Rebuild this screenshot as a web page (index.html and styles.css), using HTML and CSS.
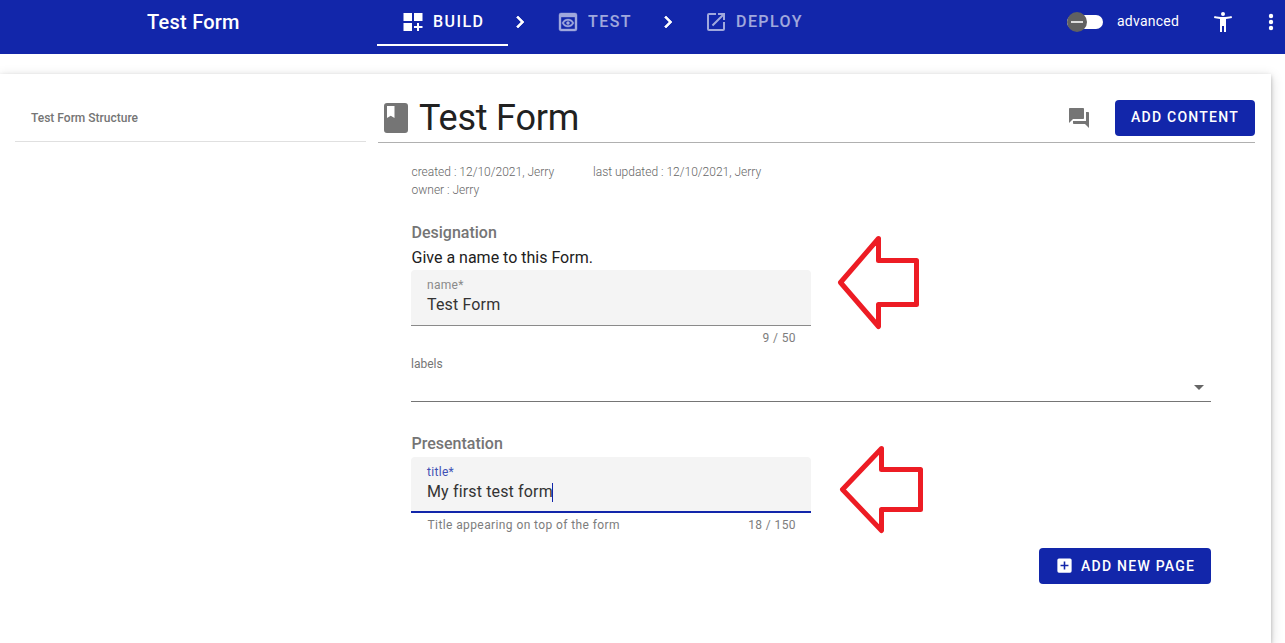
FILE: index.html
```html
<!DOCTYPE html>
<html lang="en">
<head>
<meta charset="utf-8">
<title>Test Form</title>
<link rel="stylesheet" href="styles.css">
</head>
<body>
<header class="topbar">
  <div class="app-title">Test Form</div>
  <nav class="steps">
    <a class="step step-build active"><svg class="icon" viewBox="0 0 24 24"><path d="M2.500 11H11V3H2.500zM13 3v8h8.500V3zM2.500 21H11v-8H2.500zM18 13h-2v3h-3v2h3v3h2v-3h3.500v-2H18z"/></svg><span>BUILD</span></a>
    <svg class="icon" viewBox="0 0 24 24"><path d="M10 6 8.590 7.410 13.170 12l-4.580 4.590L10 18l6-6z" stroke="#fff" stroke-width=".7"/></svg>
    <a class="step step-test"><svg class="icon" viewBox="0 0 24 24"><path d="M19 3H5a2 2 0 0 0-2 2v14c0 1.100.9 2 2 2h14a2 2 0 0 0 2-2V5a2 2 0 0 0-2-2zm0 16H5V7h14v12zM12 10.500c1.840 0 3.480.96 4.340 2.500-.86 1.540-2.500 2.500-4.340 2.500s-3.480-.96-4.340-2.500c.86-1.540 2.500-2.500 4.340-2.500M12 9c-2.730 0-5.060 1.660-6 4 .94 2.340 3.270 4 6 4s5.060-1.660 6-4c-.94-2.340-3.270-4-6-4zm0 5.500a1.500 1.500 0 1 1 0-3 1.500 1.500 0 0 1 0 3z" stroke="#fff" stroke-width=".4"/></svg><span>TEST</span></a>
    <svg class="icon" viewBox="0 0 24 24"><path d="M10 6 8.590 7.410 13.170 12l-4.580 4.590L10 18l6-6z" stroke="#fff" stroke-width=".7"/></svg>
    <a class="step step-deploy"><svg class="icon" viewBox="0 0 24 24"><path d="M19 19H5V5h7V3H5a2 2 0 0 0-2 2v14a2 2 0 0 0 2 2h14a2 2 0 0 0 2-2v-7h-2zM14 3v2h3.590l-9.830 9.830 1.410 1.410L19 6.410V10h2V3z"/></svg><span>DEPLOY</span></a>
  </nav>
  <div class="tools">
    <span class="switch"><span class="thumb"></span></span>
    <span class="advanced">advanced</span>
    <svg class="icon person" viewBox="0 0 24 24"><path d="M20.500 6c-2.610.7-5.670 1-8.500 1s-5.890-.3-8.500-1L3 8c1.860.5 4 .83 6 1v13h2v-6h2v6h2V9c2-.17 4.140-.5 6-1zM12 6a2 2 0 1 0 0-4 2 2 0 0 0 0 4z"/></svg>
    <svg class="icon more" viewBox="0 0 24 24"><circle cx="12" cy="6" r="2.200"/><circle cx="12" cy="12" r="2.200"/><circle cx="12" cy="18" r="2.200"/></svg>
  </div>
</header>
<main class="card">
  <aside class="structure">Test Form Structure</aside>
  <section class="content">
    <div class="heading">
      <svg class="book" viewBox="0 0 24 24"><path d="M18 2H6a2 2 0 0 0-2 2v16a2 2 0 0 0 2 2h12a2 2 0 0 0 2-2V4a2 2 0 0 0-2-2zM6 4h5v8l-2.500-1.500L6 12z"/></svg>
      <h1>Test Form</h1>
      <svg class="icon chat" viewBox="0 0 24 24"><path d="M21 6h-2v9H6v2c0 .55.45 1 1 1h11l4 4V7c0-.55-.45-1-1-1zm-4 6V3c0-.55-.45-1-1-1H3c-.55 0-1 .45-1 1v14l4-4h10c.55 0 1-.45 1-1z"/></svg>
      <button class="button add-content">ADD CONTENT</button>
    </div>
    <div class="form">
      <div class="meta"><span>created : 12/10/2021, Jerry</span><span>last updated : 12/10/2021, Jerry</span><span>owner : Jerry</span></div>
      <h2 class="designation">Designation</h2>
      <p class="hint">Give a name to this Form.</p>
      <div class="field-row">
        <div class="field">
          <div class="field-box"><span class="label">name*</span><span class="value">Test Form</span></div>
          <div class="helper"><span></span><span>9 / 50</span></div>
        </div>
        <svg class="arrow" viewBox="0 0 110 110"><path d="M53.500 13.500 15.500 57.500l38 44V79.500h38v-44h-38z"/></svg>
      </div>
      <div class="select"><span>labels</span><i></i></div>
      <h2 class="presentation">Presentation</h2>
      <div class="field-row">
        <div class="field focused">
          <div class="field-box"><span class="label">title*</span><span class="value">My first test form<i class="caret"></i></span></div>
          <div class="helper"><span>Title appearing on top of the form</span><span>18 / 150</span></div>
        </div>
        <svg class="arrow" viewBox="0 0 110 110"><path d="M56.500 13.500 17.500 54.500l39 41V74.500h39v-40h-39z"/></svg>
      </div>
      <button class="button add-page"><svg viewBox="0 0 24 24"><path d="M19 3H5a2 2 0 0 0-2 2v14a2 2 0 0 0 2 2h14a2 2 0 0 0 2-2V5a2 2 0 0 0-2-2zm-2 10h-4v4h-2v-4H7v-2h4V7h2v4h4z"/></svg><span>ADD NEW PAGE</span></button>
    </div>
  </section>
</main>
</body>
</html>
```

FILE: styles.css
```css
* { box-sizing: border-box; }
html, body { height: 100%; }
body { margin: 0; overflow: hidden; background: #fff; color: #212121; font-family: Roboto, "Liberation Sans", sans-serif; }
h1, h2, p { margin: 0; }
svg { display: block; flex: none; fill: currentColor; }
.icon { width: 24px; height: 24px; }

.topbar { height: 54px; background: #1226aa; color: #fff; display: flex; overflow: hidden; }
.app-title { width: 377px; padding-left: 147px; font-size: 20px; font-weight: 500; line-height: 44px; letter-spacing: .25px; white-space: nowrap; }
.steps { display: flex; }
.steps > .icon { margin-top: 10px; }
.step { display: flex; align-items: center; height: 46px; padding-left: 24px; padding-bottom: 2px; gap: 8px; font-size: 16px; font-weight: 500; letter-spacing: 1.43px; }
.step > * { opacity: .6; }
.step span { padding-bottom: 2px; }
.step.active > * { opacity: 1; }
.step.active { border-bottom: 2px solid #fff; padding-bottom: 0; }
.step-build { width: 131px; }
.step-test { width: 124px; }
.step-deploy { width: 147px; }
.tools { display: flex; align-items: center; height: 44px; margin-left: auto; }
.switch { width: 36px; height: 14px; border-radius: 7px; background: #fff; display: flex; align-items: center; }
.thumb { width: 20px; height: 20px; border-radius: 50%; background: #616161; display: flex; align-items: center; justify-content: center; flex: none; }
.thumb::after { content: ""; width: 12px; height: 2px; background: #ddd; }
.advanced { width: 108px; padding: 0 0 2px 14px; font-size: 14px; letter-spacing: .25px; }
.person { margin-right: 24px; }
.more { margin-right: 2px; }

.card { width: 1271px; height: 569px; margin-top: 20px; padding: 0 16px 0 15px; display: flex; gap: 12px; align-items: flex-start; box-shadow: 0 2px 4px rgba(0,0,0,.25), 0 3px 12px rgba(0,0,0,.16); clip-path: inset(-20px -20px 0 0); }
.structure { width: 351px; height: 68px; padding: 20px 16px 0; border-bottom: 1px solid #e0e0e0; color: #757575; font-size: 12px; font-weight: 500; line-height: 48px; }
.content { width: 877px; }
.heading { height: 69px; padding-top: 26px; border-bottom: 1px solid #b0b0b0; display: flex; color: #757575; align-items: flex-start; }
.book { width: 36px; height: 36px; }
h1 { margin-left: 5px; color: #212121; font-size: 36px; font-weight: 400; line-height: 36px; letter-spacing: -.2px; }
.chat { margin: 6px 24px 0 auto; }
.button { height: 36px; border: 0; border-radius: 4px; background: #1226aa; color: #fff; font: 500 14px/35px Roboto, "Liberation Sans", sans-serif; letter-spacing: 1.25px; padding: 0 0 1px; text-align: center; white-space: nowrap; }
.add-content { width: 140px; }
.form { width: 833px; padding-left: 33px; }
.meta { display: grid; grid-template-columns: 181.5px auto; margin-top: 20px; padding-left: .5px; color: #666; font-size: 12px; font-weight: 300; line-height: 18px; letter-spacing: 0; }
h2 { color: #757575; font-size: 16px; font-weight: 500; line-height: 24px; padding-left: .5px; }
.designation { margin-top: 22px; }
.hint { font-size: 16px; line-height: 24px; padding-left: .5px; height: 25px; padding-top: 1px; }
.field-row { display: flex; align-items: flex-start; }
.field { width: 400px; }
.field-box { height: 56px; padding: 7px 16px 0; border-radius: 4px 4px 0 0; border-bottom: 1px solid #8a8a8a; background: #f4f4f4; display: flex; flex-direction: column; }
.label { color: #8a8a8a; font-size: 12px; line-height: 16px; letter-spacing: .3px; }
.value { color: #333; font-size: 16px; line-height: 24px; letter-spacing: .15px; display: flex; align-items: center; }
.focused .field-box { border-bottom: 2px solid #1226aa; }
.focused .label { color: #3f51b5; }
.caret { width: 1px; height: 19px; background: #1226aa; margin-left: -1px; }
.helper { display: flex; justify-content: space-between; padding: 3px 15px 0 16.5px; color: #7d7d7d; font-size: 12px; line-height: 19px; letter-spacing: .4px; }
.arrow { width: 110px; height: 110px; margin: -45px 0 -80px 14px; fill: none; stroke: #ed1c24; stroke-width: 5; stroke-linejoin: round; }
.focused + .arrow { margin-top: -22px; }
.select { width: 800px; height: 54px; border-bottom: 1px solid #757575; display: flex; justify-content: space-between; padding-right: 7px; color: #757575; font-size: 12px; line-height: 33px; }
.select i { width: 0; height: 0; border: 5px solid transparent; border-top-color: #666; border-bottom: 0; margin-top: 37px; }
.presentation { margin-top: 30px; height: 25px; }
.add-page { width: 172px; margin: 13px 0 0 628px; display: flex; align-items: center; padding: 0 0 0 16px; line-height: 36px; }
.add-page svg { width: 19px; height: 19px; margin: 0 7px 2px 0; }
```
